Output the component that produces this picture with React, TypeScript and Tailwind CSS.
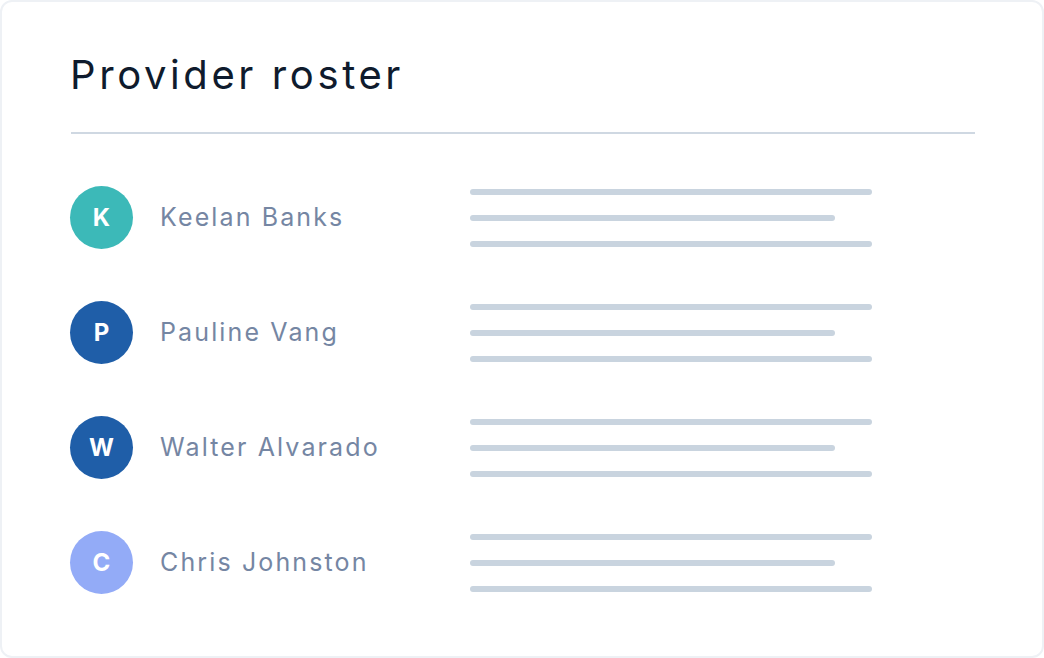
const providers = [
  { initial: "K", name: "Keelan Banks", color: "bg-[#3cb9b8]" },
  { initial: "P", name: "Pauline Vang", color: "bg-[#1f5ea8]" },
  { initial: "W", name: "Walter Alvarado", color: "bg-[#1f5ea8]" },
  { initial: "C", name: "Chris Johnston", color: "bg-[#93abf7]" },
];

function Row({ initial, name, color }: { initial: string; name: string; color: string }) {
  return (
    <div className="flex h-[115px] items-center">
      <div
        className={`flex h-[63px] w-[63px] shrink-0 items-center justify-center rounded-full ${color} text-[24px] font-bold text-white`}
      >
        {initial}
      </div>
      <div className="ml-[27px] w-[310px] text-[25px] tracking-[0.085em] text-[#7586a3]">{name}</div>
      {/* placeholder text lines */}
      <div className="flex flex-col gap-[20px]">
        <div className="h-[6px] w-[402px] rounded-full bg-[#c9d4df]" />
        <div className="h-[6px] w-[365px] rounded-full bg-[#c9d4df]" />
        <div className="h-[6px] w-[402px] rounded-full bg-[#c9d4df]" />
      </div>
    </div>
  );
}

export default function App() {
  return (
    <div className="h-[658px] w-[1044px] bg-white" style={{ fontFamily: "Inter, 'Noto Sans', sans-serif" }}>
      <div className="h-full w-full rounded-xl border-2 border-[#eef1f5] bg-white pl-[68px] pr-[67px] pt-[49px]">
        <h1 className="text-[40px] leading-[48px] tracking-[0.09em] text-[#0f1b2d]">Provider roster</h1>
        <div className="ml-px mt-[33px] h-[2px] w-[904px] bg-[#cfd8e2]" />
        <div className="mt-[26px]">
          {providers.map((p) => (
            <Row key={p.name} {...p} />
          ))}
        </div>
      </div>
    </div>
  );
}
